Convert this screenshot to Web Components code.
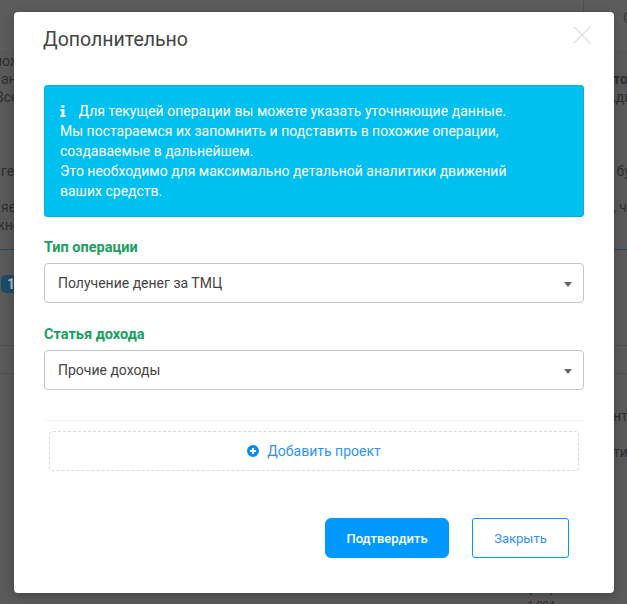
<!DOCTYPE html>
<html lang="ru">
<head>
<meta charset="utf-8">
<title>Дополнительно</title>
<style>
  html, body { margin: 0; padding: 0; height: 100%; overflow: hidden; background: #595959; }
  body { font-family: Roboto, "Liberation Sans", sans-serif; }
</style>
</head>
<body>
<page-backdrop></page-backdrop>
<action-modal heading="Дополнительно">
  <info-alert>
    <span style="letter-spacing:.035px">Для текущей операции вы можете указать уточняющие данные.</span><br>
    Мы постараемся их запомнить и подставить в похожие операции,<br>
    создаваемые в дальнейшем.<br>
    Это необходимо для максимально детальной аналитики движений<br>
    ваших средств.
  </info-alert>
  <select-field label="Тип операции" value="Получение денег за ТМЦ"></select-field>
  <select-field label="Статья дохода" value="Прочие доходы"></select-field>
  <add-project>Добавить проект</add-project>
  <modal-button slot="footer" kind="primary">Подтвердить</modal-button>
  <modal-button slot="footer" kind="outline">Закрыть</modal-button>
</action-modal>

<script>
// the page behind the dialog, only its edges stay visible
class PageBackdrop extends HTMLElement {
  constructor() {
    super();
    this.attachShadow({ mode: "open" });
  }

  connectedCallback() {
    // height, left text, its offset, right text
    const rows = [
      [18, "ложно", -6, ""],
      [18, "ан", 1, "<b>то</b>"],
      [18, "Все", -5, ",ди"],
      [56, "", 0, ""],
      [18, "гел", 1, " бу."],
      [18, "", 0, ""],
      [18, "яе", 1, ", ч"],
      [18, "жно", -6, ""]
    ];
    this.shadowRoot.innerHTML = `
      <style>
        :host {
          display: block;
          height: 604px;
          overflow: hidden;
          font-size: 14px;
          color: #2f2f2f;
        }
        .top { height: 52px; display: flex; justify-content: flex-end; box-sizing: border-box; background: #5c5c5c; border-bottom: 1px solid #585858; }
        .divider { width: 1px; height: 12px; background: #4e4e4e; margin-right: 39px; }
        .letter { width: 0; line-height: 36px; font-size: 15px; color: #3a3a3a; white-space: nowrap; margin-right: 4px; }
        .row { display: flex; justify-content: space-between; line-height: 18px; }
        .cell { width: 14px; overflow: hidden; white-space: pre; }
        .blue { height: 1px; background: #1f4f73; margin-top: 15px; }
        .badge-row { height: 95px; padding-top: 25px; box-sizing: border-box; }
        .badge { width: 26px; height: 18px; margin-left: 1px; background: #1d4a66; border-radius: 5px; color: #a9bcc9; font-weight: 700; font-size: 14px; line-height: 18px; padding-left: 6px; box-sizing: border-box; }
        .line { height: 1px; background: #4f4f4f; }
        .gap { height: 27px; }
        .far { margin-top: 33px; }
        .far + .far { margin-top: 18px; }
        .money { display: flex; justify-content: flex-end; padding-right: 72px; color: #3f2626; line-height: 14px; }
        .paren { margin-top: 119px; font-size: 14px; }
        .sum { margin-top: 5px; font-size: 11px; }
      </style>
      <div class="top"><div class="divider"></div><div class="letter">С</div></div>
      ${rows.map(([h, l, x, r]) => `
        <div class="row" style="height:${h}px"><div class="cell"><span style="margin-left:${x}px">${l}</span></div><div class="cell">${r}</div></div>`).join("")}
      <div class="blue"></div>
      <div class="badge-row"><div class="badge">1</div></div>
      <div class="line"></div>
      <div class="gap"></div>
      <div class="line"></div>
      <div class="row far"><div class="cell"></div><div class="cell">нт</div></div>
      <div class="row far"><div class="cell"></div><div class="cell">ти</div></div>
      <div class="money paren">(шт)</div>
      <div class="money sum">1 004</div>
    `;
  }
}

class ActionModal extends HTMLElement {
  constructor() {
    super();
    this.attachShadow({ mode: "open" });
  }

  connectedCallback() {
    this.shadowRoot.innerHTML = `
      <style>
        :host {
          display: block;
          position: absolute;
          top: 12px;
          left: 14px;
          width: 600px;
          height: 581px;
          box-sizing: border-box;
          background: #fff;
          border-radius: 4px;
          box-shadow: 0 2px 8px rgba(0,0,0,.25);
          color: #444;
        }
        .head { display: flex; justify-content: space-between; align-items: flex-start; padding: 14px 23px 0 29px; height: 73px; box-sizing: border-box; }
        h2 { margin: 0; font-size: 19.5px; font-weight: 400; line-height: 28px; color: #444; }
        .close { display: block; }
        .body { padding: 0 30px; }
        .foot { display: flex; justify-content: flex-end; gap: 23px; padding: 47px 45px 0 0; }
      </style>
      <div class="head">
        <h2>${this.getAttribute("heading")}</h2>
        <svg class="close" width="18" height="18" viewBox="0 0 18 18" aria-label="Закрыть">
          <path d="M.5 .5L17.5 17.5M17.5 .5L.5 17.5" stroke="#e2e2e2" stroke-width="1.4" fill="none"/>
        </svg>
      </div>
      <div class="body"><slot></slot></div>
      <div class="foot"><slot name="footer"></slot></div>
    `;
  }
}

class InfoAlert extends HTMLElement {
  constructor() {
    super();
    this.attachShadow({ mode: "open" });
  }

  connectedCallback() {
    this.shadowRoot.innerHTML = `
      <style>
        :host {
          display: block;
          box-sizing: border-box;
          height: 132px;
          padding: 15px;
          background: #00c0ef;
          border: 1px solid #00b4e0;
          border-radius: 3px;
          color: #fff;
          font-size: 14px;
          line-height: 20px;
        }
        svg { display: inline-block; width: 6px; height: 12px; margin-right: 9px; vertical-align: -1px; }
      </style>
      <svg viewBox="0 0 6 12"><path fill="#fff" d="M1.4 0h3v2.4h-3zM.4 4h4v6h1.2v2H.4v-2h1.2V6H.4z"/></svg><slot></slot>
    `;
  }
}

class SelectField extends HTMLElement {
  constructor() {
    super();
    this.attachShadow({ mode: "open" });
  }

  connectedCallback() {
    this.shadowRoot.innerHTML = `
      <style>
        :host { display: block; padding-top: 20px; margin-bottom: 1px; font-size: 14px; }
        label { display: block; height: 25px; padding-top: 1px; line-height: 20px; font-size: 14.5px; font-weight: 700; color: #18a05e; }
        .box {
          display: flex; align-items: center; justify-content: space-between;
          height: 40px; box-sizing: border-box; padding: 0 11px 0 13px;
          border: 1px solid #c4c4c4; border-radius: 4px; color: #444; background: #fff;
        }
        .arrow { width: 0; height: 0; border: 4px solid transparent; border-top: 5px solid #666; border-bottom: 0; margin-top: 2px; }
      </style>
      <label>${this.getAttribute("label")}</label>
      <div class="box"><span>${this.getAttribute("value")}</span><i class="arrow"></i></div>
    `;
  }
}

class AddProject extends HTMLElement {
  constructor() {
    super();
    this.attachShadow({ mode: "open" });
  }

  connectedCallback() {
    this.shadowRoot.innerHTML = `
      <style>
        :host { display: block; margin-top: 30px; border-top: 1px solid #f4f4f4; padding: 10px 5px 0; font-size: 14px; }
        .add {
          display: flex; align-items: center; justify-content: center; gap: 8px;
          height: 40px; box-sizing: border-box;
          border: 1px dashed #d3d8e4; border-radius: 4px; color: #2e93f5;
        }
        svg { width: 12px; height: 12px; }
      </style>
      <div class="add">
        <svg viewBox="0 0 12 12"><path fill="#0a8cf0" fill-rule="evenodd" d="M6 0a6 6 0 1 1 0 12A6 6 0 0 1 6 0zM5 3v2H3v2h2v2h2V7h2V5H7V3z"/></svg>
        <slot></slot>
      </div>
    `;
  }
}

class ModalButton extends HTMLElement {
  constructor() {
    super();
    this.attachShadow({ mode: "open" });
  }

  connectedCallback() {
    const primary = this.getAttribute("kind") === "primary";
    this.shadowRoot.innerHTML = `
      <style>
        :host { display: block; }
        button {
          display: block; height: 40px; box-sizing: border-box;
          font: 500 13px Roboto, "Liberation Sans", sans-serif;
          cursor: pointer;
          width: ${primary ? 124 : 97}px;
          border: 1px solid #0099ff;
          border-radius: ${primary ? 6 : 3}px;
          background: ${primary ? "#0099ff" : "#fff"};
          color: ${primary ? "#fff" : "#2e93f5"};
          font-weight: ${primary ? 500 : 400};
        }
      </style>
      <button type="button"><slot></slot></button>
    `;
  }
}

customElements.define("page-backdrop", PageBackdrop);
customElements.define("action-modal", ActionModal);
customElements.define("info-alert", InfoAlert);
customElements.define("select-field", SelectField);
customElements.define("add-project", AddProject);
customElements.define("modal-button", ModalButton);
</script>
</body>
</html>
